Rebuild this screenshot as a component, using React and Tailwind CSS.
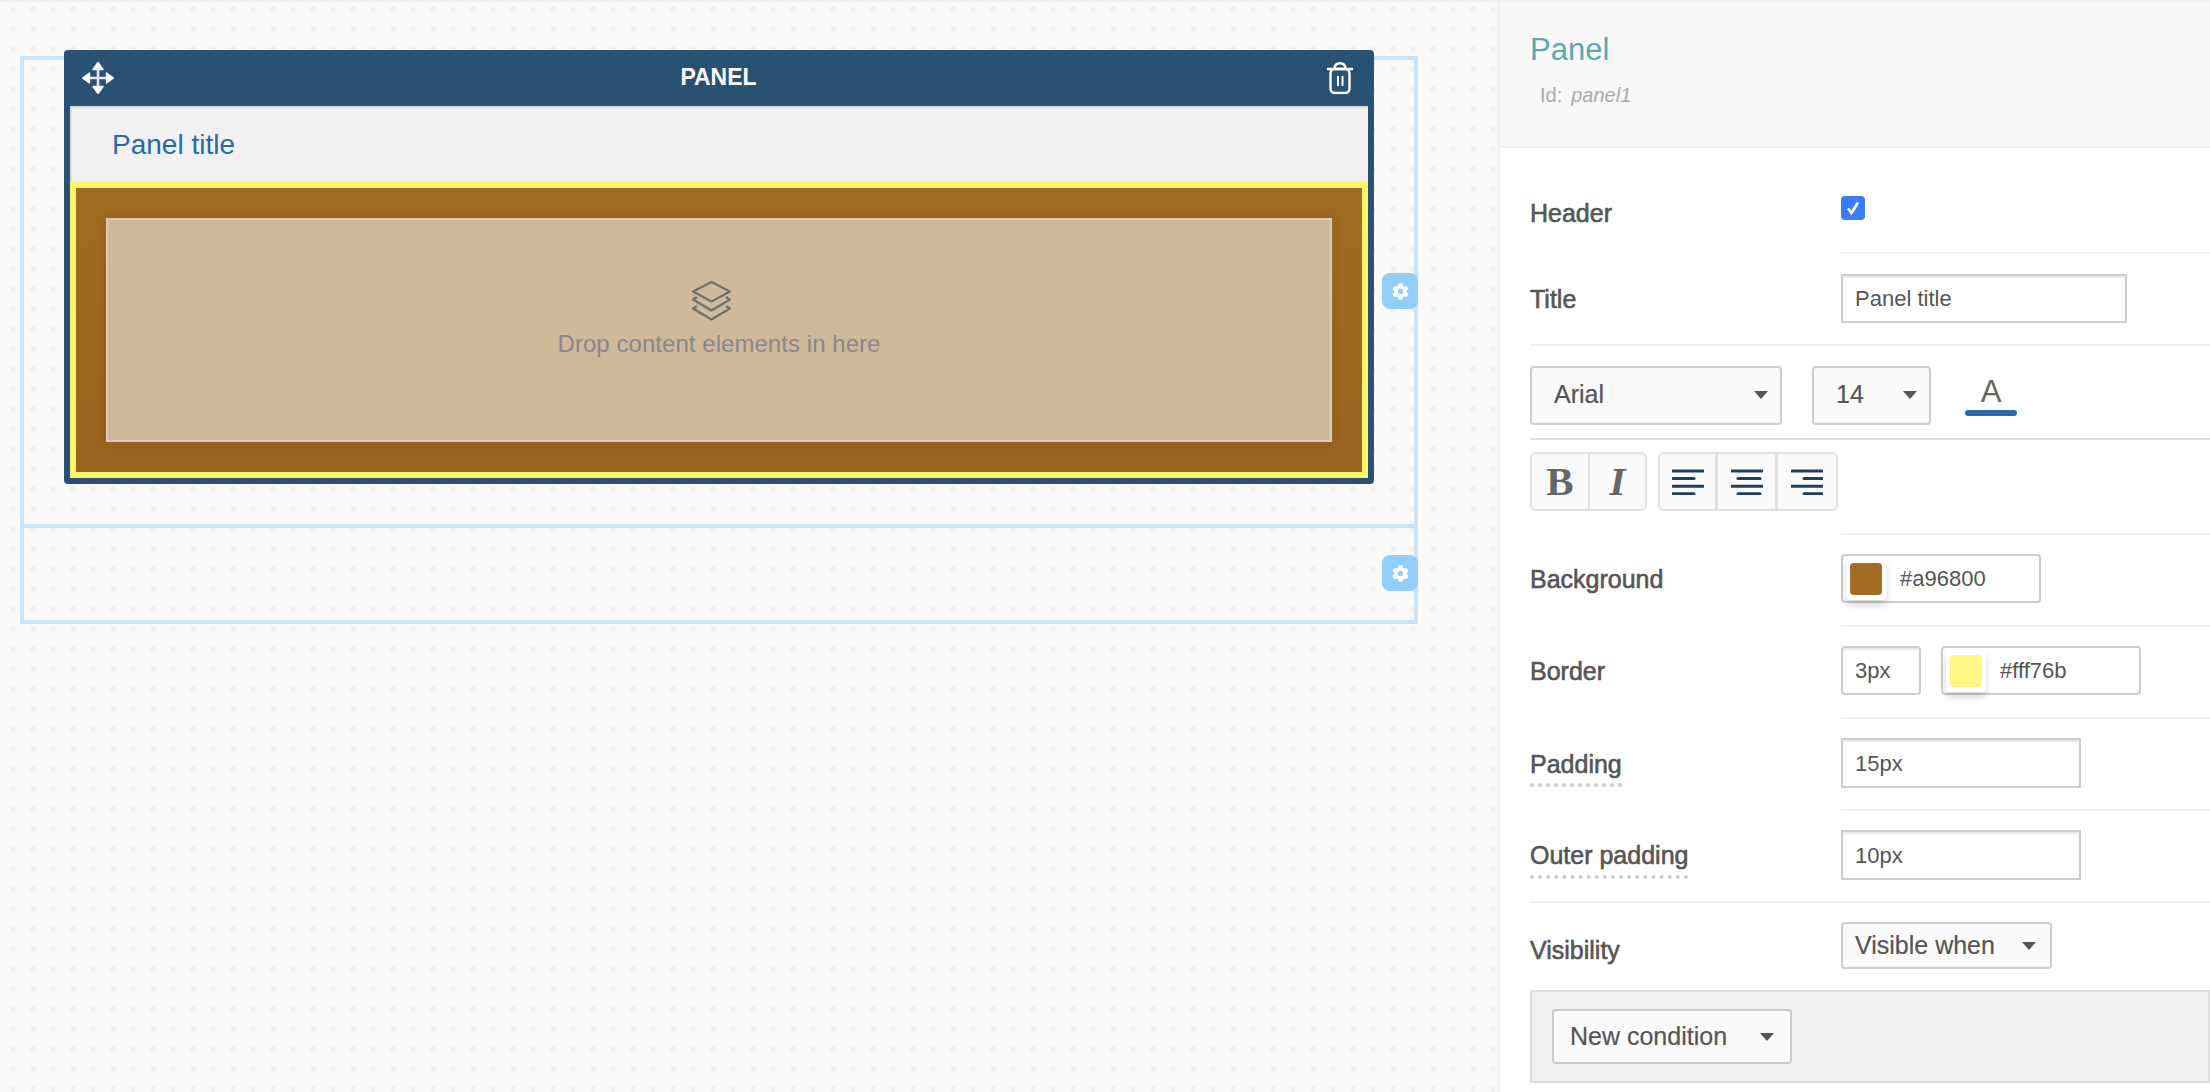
import { FaCog } from "react-icons/fa";

const MoveIcon = () => (
  <svg width="32" height="32" viewBox="0 0 32 32" className="ml-[18px] mt-[12px] shrink-0">
    <path d="M16 4V28M4 16H28" stroke="#dfe5ea" strokeWidth="2.6" />
    <path d="M16 0.5L21 7.5H11ZM16 31.5L11 24.5H21ZM0.5 16L7.5 11V21ZM31.5 16L24.5 21V11Z" fill="#fff" stroke="#fff" strokeWidth="1.4" strokeLinejoin="round" />
  </svg>
);

const TrashIcon = () => (
  <svg width="26" height="32" viewBox="0 0 26 32" fill="none" stroke="#fff" strokeWidth="2.4" className="mr-[21px] mt-[12px] shrink-0">
    <path d="M0.5 7H25.5" strokeLinecap="round" />
    <path d="M7.5 7C7.5 3 9.5 1.2 13 1.2C16.5 1.2 18.5 3 18.5 7" />
    <rect x="3.5" y="7" width="19" height="24" rx="4.5" />
    <path d="M11 14V24M15.5 14V24" strokeWidth="2" />
  </svg>
);

const LayersIcon = () => (
  <svg width="39" height="40" viewBox="0 0 39 40" fill="none" stroke="#6f6f6f" strokeWidth="2.2" strokeLinejoin="round" className="-translate-x-2">
    <path d="M19.5 1L38 10.5L19.5 20.5L1 10.5Z" />
    <path d="M5 16L1 18.5L19.5 29.5L38 18.5L34 16" />
    <path d="M5 25L1 27.5L19.5 38.5L38 27.5L34 25" />
  </svg>
);

const GearBadge = ({ className }) => (
  <div className={`absolute -right-1 flex h-9 w-9 items-center justify-center rounded-lg bg-[#93cdfb] text-white ${className}`}>
    <FaCog size={17} />
  </div>
);

const Caret = () => <span className="h-0 w-0 shrink-0 border-x-[7.5px] border-t-[8px] border-x-transparent border-t-[#555]" />;

const SelectBox = ({ label, className }) => (
  <div className={`flex items-center justify-between rounded border-2 border-[#ccc] bg-[#fafafa] text-[25px] text-[#555] [-webkit-text-stroke:0.2px_#555] ${className}`}>
    <span>{label}</span>
    <Caret />
  </div>
);

const TextBox = ({ value, className }) => (
  <div className={`flex items-center border-2 border-[#ccc] bg-white pl-3 text-[22px] text-[#555] shadow-[inset_0_2px_2px_#e8e8e8] ${className}`}>
    {value}
  </div>
);

const ColorBox = ({ value, swatch, className }) => (
  <div className={`flex h-[49px] items-center rounded border-2 border-[#ccc] bg-white text-[22px] text-[#555] ${className}`}>
    <span className="ml-[3px] flex h-[42px] w-[40px] items-center justify-center rounded bg-white shadow-[0_5px_7px_rgba(0,0,0,0.16)]">
      <span className={`h-8 w-8 rounded ${swatch}`} />
    </span>
    <span className="ml-[14px]">{value}</span>
  </div>
);

const Label = ({ children, className = "" }) => (
  <div className={`w-[311px] shrink-0 text-[25px] leading-[26px] text-[#555] [-webkit-text-stroke:0.6px_#555] ${className}`}>
    <span>{children}</span>
  </div>
);

const AlignIcon = ({ lines }) => (
  <svg width="32" height="26" viewBox="0 0 32 26" stroke="#1f3f5b" strokeWidth="3" strokeLinecap="round">
    {lines.map(([x1, x2], i) => (
      <line key={i} x1={x1} x2={x2} y1={2 + i * 7.6} y2={2 + i * 7.6} />
    ))}
  </svg>
);

export default function App() {
  return (
    <div className="h-[1092px] w-[2210px] overflow-hidden bg-white font-['Liberation_Sans',Arial,sans-serif]">
      <div className="h-[2px] bg-[#f0f0f0]" />
      <div className="flex h-[1090px]">
        {/* canvas */}
        <div className="h-full w-[1497px] shrink-0 bg-[#fafafa] bg-[radial-gradient(circle,#f1f1f1_2.6px,transparent_3.2px)] bg-[size:20px_20px] bg-[position:3px_-3px] pt-[54px] pl-5">
          <div className="relative w-[1398px] border-4 border-[#c8e3f9]">
            <div className="flow-root h-[468px] border-b-4 border-[#c8e3f9]">
              <div className="relative z-10 ml-10 -mt-[10px] w-[1310px] rounded bg-[#2a5073]">
                <div className="flex h-14 items-start justify-between text-white">
                  <MoveIcon />
                  <span className="mt-[14px] -translate-x-[2px] text-[23px] leading-[26px] font-bold">PANEL</span>
                  <TrashIcon />
                </div>
                <div className="px-[6px] pb-[6px]">
                  <div className="flex h-[76px] items-center border-t-2 border-l-2 border-[#dddddd] bg-[#f1f1f1] pl-[40px] text-[28px] text-[#2a68ab]">
                    Panel title
                  </div>
                  <div className="h-[296px] border-[6px] border-[#fff76b] bg-gradient-to-b from-[#a16c24] to-[#98641f] p-[30px]">
                    <div className="flex h-[224px] flex-col items-center border-2 border-[#d8ccbb] bg-[#d0b89a] pt-[61px] shadow-[0_0_12px_rgba(0,0,0,0.1)]">
                      <LayersIcon />
                      <span className="mt-[9px] text-[24px] leading-[28px] tracking-[0.05px] text-[#888888]">Drop content elements in here</span>
                    </div>
                  </div>
                </div>
              </div>
            </div>
            <div className="h-[92px]" />
            <GearBadge className="top-[213px]" />
            <GearBadge className="top-[495px]" />
          </div>
        </div>

        {/* properties sidebar */}
        <div className="h-full w-[713px] shrink-0 border-l-[3px] border-[#f0f0f0] bg-white">
          <div className="h-[146px] border-b-2 border-[#f0f0f0] bg-[#f8f8f8] pt-[30px] pl-[30px]">
            <div className="text-[31px] leading-9 text-[#5ba8b2]">Panel</div>
            <div className="mt-[17px] ml-[10px] flex items-baseline text-[#aaaaaa]">
              <span className="text-[20px] leading-5">Id:</span>
              <span className="ml-[9px] text-[20px] leading-5 italic">panel1</span>
            </div>
          </div>

          <div className="pl-[30px]">
            <div className="flex h-[104px] items-start">
              <Label className="pt-[52px]">Header</Label>
              <span className="mt-[48px] flex h-6 w-6 items-center justify-center rounded bg-[#3b7cf5]">
                <svg width="16" height="16" viewBox="0 0 16 16" fill="none" stroke="#fff" strokeWidth="2.6">
                  <path d="M3 8.5L6.5 13L13 2.5" />
                </svg>
              </span>
            </div>
            <div className="ml-[311px] h-[2px] bg-[#f0f0f0]" />

            <div className="flex h-[90px] items-start">
              <Label className="pt-[32px]">Title</Label>
              <TextBox value="Panel title" className="mt-[20px] h-[49px] w-[286px]" />
            </div>
            <div className="h-[2px] bg-[#f0f0f0]" />

            <div className="flex h-[92px] items-start pt-5">
              <SelectBox label="Arial" className="h-[59px] w-[252px] pr-3 pb-[2px] pl-[22px]" />
              <SelectBox label="14" className="ml-[30px] h-[59px] w-[119px] pr-3 pb-[2px] pl-[22px]" />
              <div className="ml-[34px] flex w-[52px] flex-col items-center">
                <span className="mt-[10px] text-[31px] leading-[32px] text-[#666]">A</span>
                <span className="mt-[2px] h-[6px] w-[52px] rounded-full bg-[#2a68ab]" />
              </div>
            </div>
            <div className="h-[2px] bg-[#dddddd]" />

            <div className="flex h-[93px] items-start gap-[11px] pt-3">
              <div className="flex h-[59px] w-[117px] rounded-md border-2 border-[#e0e0e0] bg-[#fafafa] font-['Liberation_Serif',serif] text-[41px] leading-[55px] font-bold text-[#666]">
                <span className="w-[58px] border-r-2 border-[#e0e0e0] text-center">B</span>
                <span className="flex-1 text-center italic">I</span>
              </div>
              <div className="flex h-[59px] w-[180px] rounded-md border-2 border-[#e0e0e0] bg-[#fafafa]">
                <div className="flex w-[58px] items-center justify-center border-r-[3px] border-[#e0e0e0]">
                  <AlignIcon lines={[[1, 31], [1, 22], [1, 31], [1, 22]]} />
                </div>
                <div className="flex w-[60px] items-center justify-center border-r-[3px] border-[#e0e0e0]">
                  <AlignIcon lines={[[1, 31], [7, 29], [1, 31], [7, 29]]} />
                </div>
                <div className="flex flex-1 items-center justify-center">
                  <AlignIcon lines={[[1, 31], [13, 31], [1, 31], [13, 31]]} />
                </div>
              </div>
            </div>
            <div className="ml-[311px] h-[2px] bg-[#f0f0f0]" />

            <div className="flex h-[90px] items-start">
              <Label className="pt-[31px]">Background</Label>
              <ColorBox value="#a96800" swatch="bg-[#a26c24]" className="mt-[19px] w-[200px]" />
            </div>
            <div className="ml-[311px] h-[2px] bg-[#f0f0f0]" />

            <div className="flex h-[90px] items-start">
              <Label className="pt-[31px]">Border</Label>
              <TextBox value="3px" className="mt-[19px] h-[49px] w-[80px] rounded" />
              <ColorBox value="#fff76b" swatch="bg-[#fff983]" className="mt-[19px] ml-[20px] w-[200px]" />
            </div>
            <div className="ml-[311px] h-[2px] bg-[#f0f0f0]" />

            <div className="flex h-[90px] items-start">
              <Label className="pt-[32px]">
                <span className="border-b-4 border-dotted border-[#cccccc] pb-[5px]">Padding</span>
              </Label>
              <TextBox value="15px" className="mt-[19px] h-[50px] w-[240px]" />
            </div>
            <div className="ml-[311px] h-[2px] bg-[#f0f0f0]" />

            <div className="flex h-[90px] items-start">
              <Label className="pt-[31px]">
                <span className="border-b-4 border-dotted border-[#cccccc] pb-[6px]">Outer padding</span>
              </Label>
              <TextBox value="10px" className="mt-[19px] h-[50px] w-[240px]" />
            </div>
            <div className="h-[2px] bg-[#f0f0f0]" />

            <div className="flex h-[87px] items-start">
              <Label className="pt-[34px]">Visibility</Label>
              <SelectBox label="Visible when" className="mt-[19px] h-[47px] w-[211px] pr-[14px] pl-[12px]" />
            </div>

            <div className="flex h-[93px] items-center border-2 border-[#dddddd] bg-[#f0f0f0] pl-5">
              <SelectBox label="New condition" className="h-[55px] w-[240px] pr-[16px] pl-[16px]" />
            </div>
          </div>
        </div>
      </div>
    </div>
  );
}
